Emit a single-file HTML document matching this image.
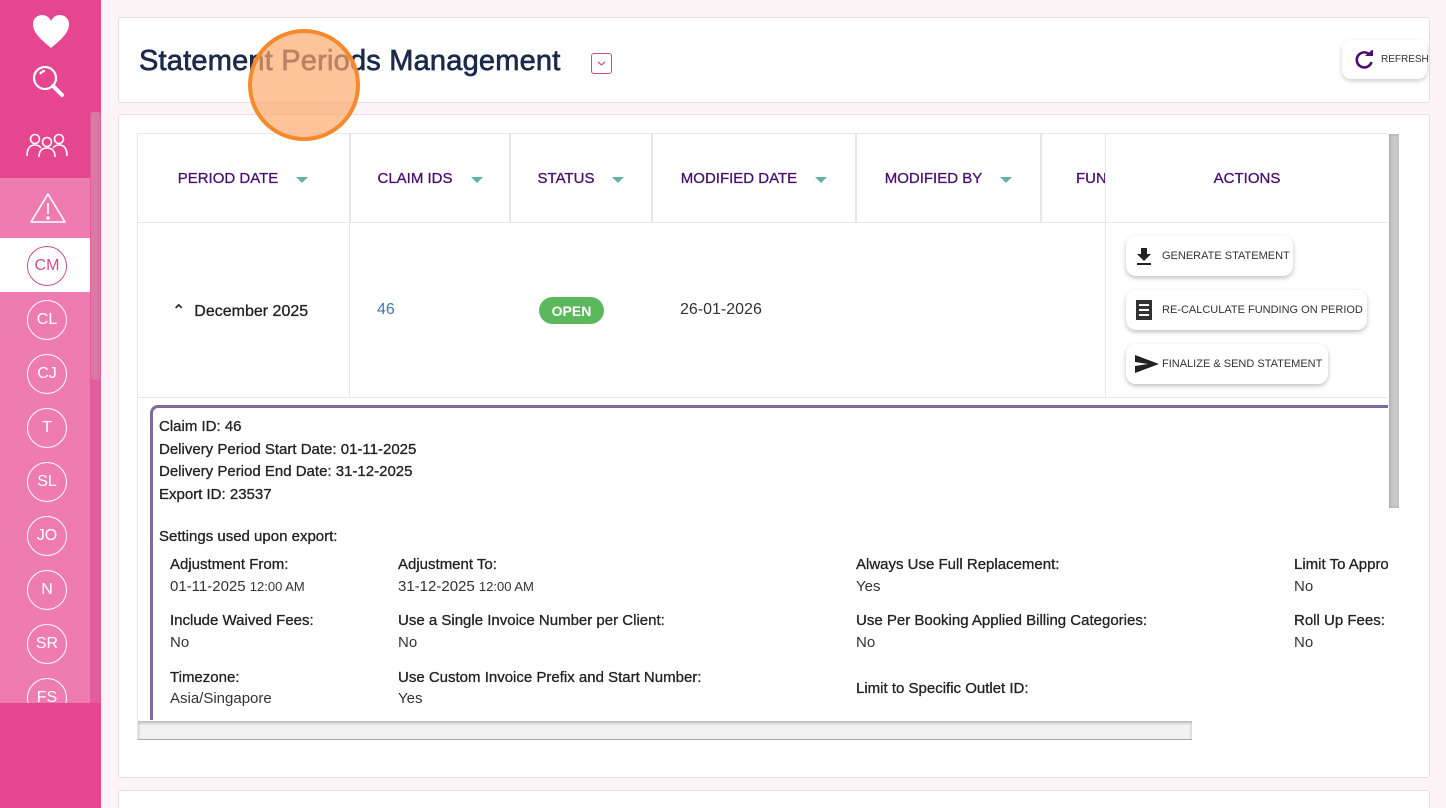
<!DOCTYPE html>
<html><head><style>
*{box-sizing:border-box;margin:0;padding:0}
html,body{width:1446px;height:808px;overflow:hidden}
body{background:#fcf4f6;font-family:"Liberation Sans",sans-serif;position:relative;color:#222}
.abs{position:absolute}
.sb{left:0;top:0;width:101px;height:808px;background:#e5468f}
.sbl{left:0;top:178px;width:90px;height:525px;background:#ee7cb1}
.sbs{left:90px;top:112px;width:11px;height:591px;background:#e55c9c}
.sbt{left:91px;top:112px;width:9px;height:268px;background:#d97aa5;border-radius:4px}
.av{left:27px;width:40px;height:40px;border:1.5px solid #fff;border-radius:50%;color:#fff;font-size:16px;display:flex;align-items:center;justify-content:center}
.card{background:#fff;border:1px solid #eadde2;border-radius:3px}
.th{top:133px;height:90px;border-right:2px solid #e6e6ef;color:#4a0f6e;font-size:15px;display:flex;align-items:center;justify-content:center;-webkit-text-stroke:0.3px #4a0f6e}
.tri{display:inline-block;width:0;height:0;border-left:6px solid transparent;border-right:6px solid transparent;border-top:6px solid #5fb3a0;margin-left:18px;margin-top:3px}
.btn{left:1126px;background:#fff;border-radius:10px;box-shadow:0 2px 5px rgba(0,0,0,.25);font-size:11px;color:#333;display:flex;align-items:center;height:40px;padding:0 6px 0 8px;white-space:nowrap;overflow:hidden}
.lbl{font-size:15px;color:#222;-webkit-text-stroke:0.3px #222}
.val{font-size:15px;color:#333}
</style></head><body>
<div class="abs sb"></div>
<div class="abs sbl"></div>
<div class="abs sbs"></div>
<div class="abs sbt"></div>
<div class="abs" style="left:0;top:238px;width:90px;height:54px;background:#fff"></div>
<svg class="abs" style="left:31px;top:14px" width="40" height="36" viewBox="0 0 40 36"><path d="M20 34 C8 24 2 18 2 10 C2 4 7 1 11 1 C15 1 18 3 20 7 C22 3 25 1 29 1 C33 1 38 4 38 10 C38 18 32 24 20 34Z" fill="#fff"/></svg>
<svg class="abs" style="left:30px;top:64px" width="36" height="36" viewBox="0 0 36 36" fill="none" stroke="#fff" stroke-width="2.2"><circle cx="15" cy="14" r="11"/><path d="M23 22 L32 31" stroke-width="4" stroke-linecap="round"/><path d="M10 10 Q12 7 15 7"/></svg>
<svg class="abs" style="left:26px;top:132px" width="42" height="26" viewBox="0 0 42 26" fill="none" stroke="#fff" stroke-width="1.6"><circle cx="9" cy="7" r="4.5"/><circle cx="21" cy="10" r="4.5"/><circle cx="33" cy="7" r="4.5"/><path d="M1 24 Q1 13 9 13 Q13 13 15 16"/><path d="M13 25 Q13 16 21 16 Q29 16 29 25"/><path d="M41 24 Q41 13 33 13 Q29 13 27 16"/></svg>
<svg class="abs" style="left:29px;top:192px" width="38" height="32" viewBox="0 0 38 32" fill="none" stroke="#fff" stroke-width="1.6"><path d="M19 2 L36 30 L2 30 Z" stroke-linejoin="round"/><path d="M19 11 L19 22"/><circle cx="19" cy="26" r="1" fill="#fff"/></svg>
<div class="abs av" style="top:246px;border-color:#d14b8a;color:#d14b8a">CM</div>
<div class="abs av" style="top:300px">CL</div>
<div class="abs av" style="top:354px">CJ</div>
<div class="abs av" style="top:408px">T</div>
<div class="abs av" style="top:462px">SL</div>
<div class="abs av" style="top:516px">JO</div>
<div class="abs av" style="top:570px">N</div>
<div class="abs av" style="top:624px">SR</div>
<div class="abs" style="left:0;top:678px;width:90px;height:25px;overflow:hidden"><div class="abs av" style="top:0">FS</div></div>

<div class="abs card" style="left:118px;top:17px;width:1312px;height:86px"></div>
<div class="abs" style="left:139px;top:45px;font-size:29px;color:#1c2a4a;-webkit-text-stroke:0.7px #1c2a4a;letter-spacing:0.2px">Statement Periods Management</div>
<div class="abs" style="left:591px;top:53px;width:21px;height:21px;border:1.5px solid #d14b8a;border-radius:3px"></div>
<svg class="abs" style="left:596px;top:60px" width="11" height="7" viewBox="0 0 11 7"><path d="M2 2 L5.5 5 L9 2" stroke="#d14b8a" fill="none" stroke-width="1.2"/></svg>
<div class="abs" style="left:1342px;top:40px;width:85px;height:39px;background:#fff;border-radius:9px;box-shadow:0 2px 5px rgba(0,0,0,.2);display:flex;align-items:center;padding-left:12px;font-size:10px;color:#333;white-space:nowrap">
<svg width="22" height="20" viewBox="0 0 22 20" style="margin-right:5px;flex:none"><path d="M16 5 A7.5 7.5 0 1 0 17.5 12" stroke="#4a0f6e" stroke-width="2.6" fill="none"/><path d="M11 6 L19 6 L19 -1Z" fill="#4a0f6e"/></svg>REFRESH</div>

<div class="abs card" style="left:118px;top:114px;width:1312px;height:664px"></div>
<div class="abs card" style="left:118px;top:790px;width:1312px;height:30px"></div>
<div class="abs" style="left:137px;top:133px;width:1263px;height:607px;border:1px solid #e6e6ef;background:#fff"></div>
<div class="abs" style="left:137px;top:222px;width:1251px;height:1px;background:#e6e6ef"></div>
<div class="abs" style="left:137px;top:397px;width:1251px;height:1px;background:#e6e6ef"></div>
<div class="abs th" style="left:137px;width:214px">PERIOD DATE<span class="tri"></span></div>
<div class="abs th" style="left:351px;width:160px">CLAIM IDS<span class="tri"></span></div>
<div class="abs th" style="left:511px;width:142px">STATUS<span class="tri"></span></div>
<div class="abs th" style="left:653px;width:204px">MODIFIED DATE<span class="tri"></span></div>
<div class="abs th" style="left:857px;width:185px">MODIFIED BY<span class="tri"></span></div>
<div class="abs th" style="left:1042px;width:64px;justify-content:flex-start;padding-left:34px;overflow:hidden;border-right:1px solid #e6e6ef">FUN</div>
<div class="abs th" style="left:1106px;width:282px;border-right:none">ACTIONS</div>
<div class="abs" style="left:349px;top:223px;width:1px;height:175px;background:#e6e6ef"></div>
<div class="abs" style="left:1105px;top:223px;width:1px;height:175px;background:#e6e6ef"></div>
<div class="abs" style="left:172px;top:301px;font-size:16px;color:#222;-webkit-text-stroke:0.3px #222">⌃&nbsp;&nbsp;December 2025</div>
<div class="abs" style="left:377px;top:301px;font-size:16px;color:#3e7aa8">46</div>
<div class="abs" style="left:539px;top:297px;width:65px;height:27px;background:#5cb85c;border-radius:14px;color:#fff;font-weight:bold;font-size:14px;display:flex;align-items:center;justify-content:center">OPEN</div>
<div class="abs" style="left:680px;top:301px;font-size:16px;color:#333">26-01-2026</div>
<div class="abs btn" style="top:236px;width:167px"><svg width="20" height="20" viewBox="0 0 20 20" style="margin-right:8px;flex:none"><path d="M7 2 H13 V8 H17 L10 15 L3 8 H7Z M3 17 H17 V19 H3Z" fill="#222"/></svg>GENERATE STATEMENT</div>
<div class="abs btn" style="top:290px;width:241px"><svg width="20" height="22" viewBox="0 0 20 22" style="margin-right:8px;flex:none"><path d="M2 1 H18 V21 H2Z" fill="#333"/><path d="M5 6 H15 M5 11 H15 M5 16 H15" stroke="#fff" stroke-width="2"/></svg>RE-CALCULATE FUNDING ON PERIOD</div>
<div class="abs btn" style="top:344px;width:202px"><svg width="26" height="20" viewBox="0 0 26 20" style="margin-right:2px;flex:none"><path d="M1 1 L25 10 L1 19 L1 12 L14 10 L1 8Z" fill="#222"/></svg>FINALIZE &amp; SEND STATEMENT</div>

<div class="abs" style="left:150px;top:405px;width:1245px;height:330px;border-left:3px solid #7f6a9a;border-top:3px solid #7f6a9a;border-top-left-radius:8px;background:#fff"></div>
<div class="abs lbl" style="left:159px;top:416px;line-height:22.5px">Claim ID: 46<br>Delivery Period Start Date: 01-11-2025<br>Delivery Period End Date: 31-12-2025<br>Export ID: 23537</div>
<div class="abs lbl" style="left:159px;top:528px">Settings used upon export:</div>
<div class="abs lbl" style="left:170px;top:556px">Adjustment From:</div>
<div class="abs val" style="left:170px;top:578px">01-11-2025 <span style="font-size:13px">12:00 AM</span></div>
<div class="abs lbl" style="left:398px;top:556px">Adjustment To:</div>
<div class="abs val" style="left:398px;top:578px">31-12-2025 <span style="font-size:13px">12:00 AM</span></div>
<div class="abs lbl" style="left:856px;top:556px">Always Use Full Replacement:</div>
<div class="abs val" style="left:856px;top:578px">Yes</div>
<div class="abs lbl" style="left:1294px;top:556px;width:94px;overflow:hidden;white-space:nowrap">Limit To Approved</div>
<div class="abs val" style="left:1294px;top:578px">No</div>
<div class="abs lbl" style="left:170px;top:612px">Include Waived Fees:</div>
<div class="abs val" style="left:170px;top:634px">No</div>
<div class="abs lbl" style="left:398px;top:612px">Use a Single Invoice Number per Client:</div>
<div class="abs val" style="left:398px;top:634px">No</div>
<div class="abs lbl" style="left:856px;top:612px">Use Per Booking Applied Billing Categories:</div>
<div class="abs val" style="left:856px;top:634px">No</div>
<div class="abs lbl" style="left:1294px;top:612px">Roll Up Fees:</div>
<div class="abs val" style="left:1294px;top:634px">No</div>
<div class="abs lbl" style="left:170px;top:669px">Timezone:</div>
<div class="abs val" style="left:170px;top:690px">Asia/Singapore</div>
<div class="abs lbl" style="left:398px;top:669px">Use Custom Invoice Prefix and Start Number:</div>
<div class="abs val" style="left:398px;top:690px">Yes</div>
<div class="abs lbl" style="left:856px;top:680px">Limit to Specific Outlet ID:</div>
<div class="abs" style="left:1388px;top:133px;width:12px;height:607px;background:#fff"></div>
<div class="abs" style="left:1389px;top:134px;width:10px;height:374px;background:#c9c9c9;box-shadow:inset 1px 0 3px rgba(0,0,0,.2)"></div>
<div class="abs" style="left:138px;top:720px;width:1262px;height:20px;background:#fff"></div>
<div class="abs" style="left:138px;top:721px;width:1054px;height:19px;background:#f2f2f2;box-shadow:inset 0 2px 3px rgba(0,0,0,.25);border-bottom:1px solid #aaa"></div>
<div class="abs" style="left:248px;top:29px;width:112px;height:112px;border-radius:50%;background:rgba(252,170,110,.7);border:4px solid #f58a2c"></div>
</body></html>
